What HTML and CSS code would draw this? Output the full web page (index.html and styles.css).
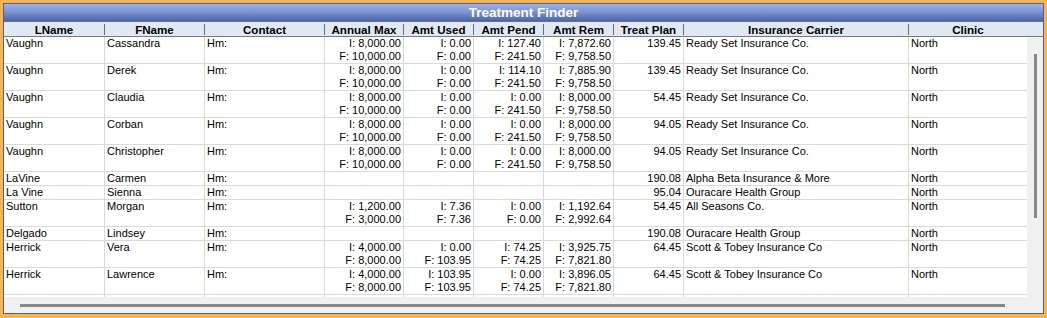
FILE: index.html
```html
<!DOCTYPE html>
<html>
<head>
<meta charset="utf-8">
<link rel="stylesheet" href="styles.css">
</head>
<body>
<div class="window">
  <div class="frame">
    <div class="title">Treatment Finder</div>
    <div class="head">
      <div class="hc">LName</div>
      <div class="hc">FName</div>
      <div class="hc">Contact</div>
      <div class="hc">Annual Max</div>
      <div class="hc">Amt Used</div>
      <div class="hc">Amt Pend</div>
      <div class="hc">Amt Rem</div>
      <div class="hc">Treat Plan</div>
      <div class="hc">Insurance Carrier</div>
      <div class="hc last">Clinic</div>
    </div>
    <div class="body">
      <div class="grid">
        <div class="row two"><div class="c">Vaughn</div><div class="c">Cassandra</div><div class="c">Hm:</div><div class="c n">I: 8,000.00<br>F: 10,000.00</div><div class="c n">I: 0.00<br>F: 0.00</div><div class="c n">I: 127.40<br>F: 241.50</div><div class="c n">I: 7,872.60<br>F: 9,758.50</div><div class="c n">139.45</div><div class="c">Ready Set Insurance Co.</div><div class="c last">North</div></div>
        <div class="row two"><div class="c">Vaughn</div><div class="c">Derek</div><div class="c">Hm:</div><div class="c n">I: 8,000.00<br>F: 10,000.00</div><div class="c n">I: 0.00<br>F: 0.00</div><div class="c n">I: 114.10<br>F: 241.50</div><div class="c n">I: 7,885.90<br>F: 9,758.50</div><div class="c n">139.45</div><div class="c">Ready Set Insurance Co.</div><div class="c last">North</div></div>
        <div class="row two"><div class="c">Vaughn</div><div class="c">Claudia</div><div class="c">Hm:</div><div class="c n">I: 8,000.00<br>F: 10,000.00</div><div class="c n">I: 0.00<br>F: 0.00</div><div class="c n">I: 0.00<br>F: 241.50</div><div class="c n">I: 8,000.00<br>F: 9,758.50</div><div class="c n">54.45</div><div class="c">Ready Set Insurance Co.</div><div class="c last">North</div></div>
        <div class="row two"><div class="c">Vaughn</div><div class="c">Corban</div><div class="c">Hm:</div><div class="c n">I: 8,000.00<br>F: 10,000.00</div><div class="c n">I: 0.00<br>F: 0.00</div><div class="c n">I: 0.00<br>F: 241.50</div><div class="c n">I: 8,000.00<br>F: 9,758.50</div><div class="c n">94.05</div><div class="c">Ready Set Insurance Co.</div><div class="c last">North</div></div>
        <div class="row two"><div class="c">Vaughn</div><div class="c">Christopher</div><div class="c">Hm:</div><div class="c n">I: 8,000.00<br>F: 10,000.00</div><div class="c n">I: 0.00<br>F: 0.00</div><div class="c n">I: 0.00<br>F: 241.50</div><div class="c n">I: 8,000.00<br>F: 9,758.50</div><div class="c n">94.05</div><div class="c">Ready Set Insurance Co.</div><div class="c last">North</div></div>
        <div class="row one"><div class="c">LaVine</div><div class="c">Carmen</div><div class="c">Hm:</div><div class="c n"></div><div class="c n"></div><div class="c n"></div><div class="c n"></div><div class="c n">190.08</div><div class="c">Alpha Beta Insurance &amp; More</div><div class="c last">North</div></div>
        <div class="row one"><div class="c">La Vine</div><div class="c">Sienna</div><div class="c">Hm:</div><div class="c n"></div><div class="c n"></div><div class="c n"></div><div class="c n"></div><div class="c n">95.04</div><div class="c">Ouracare Health Group</div><div class="c last">North</div></div>
        <div class="row two"><div class="c">Sutton</div><div class="c">Morgan</div><div class="c">Hm:</div><div class="c n">I: 1,200.00<br>F: 3,000.00</div><div class="c n">I: 7.36<br>F: 7.36</div><div class="c n">I: 0.00<br>F: 0.00</div><div class="c n">I: 1,192.64<br>F: 2,992.64</div><div class="c n">54.45</div><div class="c">All Seasons Co.</div><div class="c last">North</div></div>
        <div class="row one"><div class="c">Delgado</div><div class="c">Lindsey</div><div class="c">Hm:</div><div class="c n"></div><div class="c n"></div><div class="c n"></div><div class="c n"></div><div class="c n">190.08</div><div class="c">Ouracare Health Group</div><div class="c last">North</div></div>
        <div class="row two"><div class="c">Herrick</div><div class="c">Vera</div><div class="c">Hm:</div><div class="c n">I: 4,000.00<br>F: 8,000.00</div><div class="c n">I: 0.00<br>F: 103.95</div><div class="c n">I: 74.25<br>F: 74.25</div><div class="c n">I: 3,925.75<br>F: 7,821.80</div><div class="c n">64.45</div><div class="c">Scott &amp; Tobey Insurance Co</div><div class="c last">North</div></div>
        <div class="row two"><div class="c">Herrick</div><div class="c">Lawrence</div><div class="c">Hm:</div><div class="c n">I: 4,000.00<br>F: 8,000.00</div><div class="c n">I: 103.95<br>F: 103.95</div><div class="c n">I: 0.00<br>F: 74.25</div><div class="c n">I: 3,896.05<br>F: 7,821.80</div><div class="c n">64.45</div><div class="c">Scott &amp; Tobey Insurance Co</div><div class="c last">North</div></div>
        <div class="row two"><div class="c"></div><div class="c"></div><div class="c"></div><div class="c n"></div><div class="c n"></div><div class="c n"></div><div class="c n"></div><div class="c n"></div><div class="c"></div><div class="c last"></div></div>
      </div>
      <div class="vscroll"><div class="vthumb"></div></div>
    </div>
    <div class="hscroll"><div class="hthumb"></div></div>
  </div>
</div>
</body>
</html>
```

FILE: styles.css
```css
* { box-sizing: border-box; }
html, body { margin: 0; padding: 0; }
body {
  width: 1047px;
  height: 318px;
  overflow: hidden;
  font-family: "Liberation Sans", Arial, sans-serif;
  background: #fbb445;
}
.window {
  width: 1047px;
  height: 318px;
  padding: 3px 3px 4px 3px;
  background: #fbb445;
}
.frame {
  width: 1041px;
  height: 311px;
  border: 1px solid #4a62a6;
  display: flex;
  flex-direction: column;
  background: #f0f0f0;
}
.title {
  height: 18px;
  border-bottom: 1px solid #6a6f80;
  background: linear-gradient(#9fb3e7, #7e95d4 45%, #4a64a9);
  color: #fff;
  font-weight: bold;
  font-size: 13.5px;
  line-height: 17px;
  text-align: center;
}
.head {
  height: 15px;
  padding-top: 2px;
  border-bottom: 1px solid #7a7a7a;
  background: #dfe8f3;
  display: grid;
  grid-template-columns: 101px 100px 120px 79px 70px 70px 70px 70px 225px 118px;
  align-items: start;
}
.hc {
  height: 11px;
  border-right: 1px solid #6e6e6e;
  font-weight: bold;
  font-size: 11.6px;
  line-height: 11px;
  text-align: center;
  white-space: nowrap;
  color: #000;
}
.hc.last { border-right: none; }
.body {
  height: 260px;
  display: flex;
}
.grid {
  width: 1023px;
  height: 260px;
  overflow: hidden;
  background: #fff;
}
.row {
  display: grid;
  grid-template-columns: 101px 100px 120px 79px 70px 70px 70px 70px 225px 118px;
  border-bottom: 1px solid #d9d9d9;
}
.row.two { height: 27px; }
.row.one { height: 14px; }
.c {
  border-right: 1px solid #d9d9d9;
  padding: 0 2px;
  font-size: 11px;
  line-height: 13px;
  color: #000;
  white-space: nowrap;
  overflow: hidden;
}
.c.n { text-align: right; padding: 0 2px 0 1px; }
.c.last { border-right: none; }
.vscroll {
  width: 16px;
  height: 260px;
  background: #f0f0f0;
  padding: 17px 0 0 7px;
}
.vthumb {
  width: 3px;
  height: 164px;
  background: #888;
}
.hscroll {
  height: 16px;
  background: #f0f0f0;
  padding: 7px 0 0 16px;
}
.hthumb {
  width: 985px;
  height: 3px;
  background: #888;
}
```
